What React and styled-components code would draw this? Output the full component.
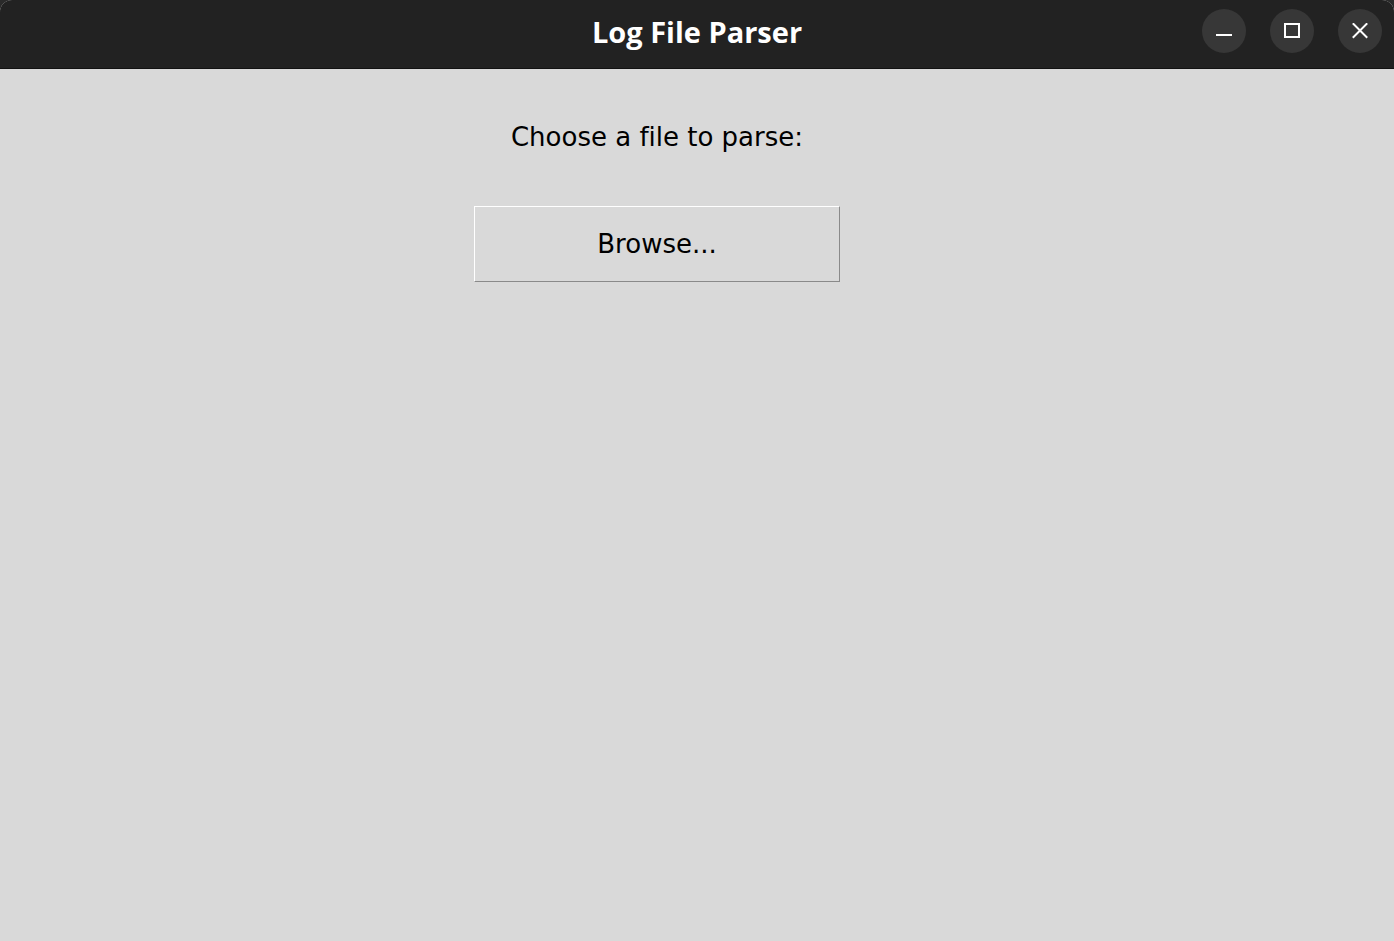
import React from "react";
import styled, { createGlobalStyle } from "styled-components";

const Global = createGlobalStyle`
  html, body { margin: 0; padding: 0; background: #2a2a2a; }
  #root { height: 941px; }
`;

const Window = styled.div`
  height: 941px;
  display: flex;
  flex-direction: column;
  background: #d9d9d9;
  border-radius: 12px 12px 0 0;
  overflow: hidden;
`;

const TitleBar = styled.div`
  height: 68px;
  flex: none;
  background: #222222;
  border-bottom: 1px solid #121212;
  display: grid;
  grid-template-columns: 1fr auto 1fr;
  align-items: center;
`;

const Title = styled.div`
  grid-column: 2;
  font-family: "Open Sans", "Noto Sans", sans-serif;
  font-weight: 700;
  font-size: 29px;
  color: #ffffff;
  line-height: 1;
  padding-bottom: 6px;
`;

const Controls = styled.div`
  grid-column: 3;
  justify-self: end;
  display: flex;
  gap: 24px;
  padding-right: 12px;
  padding-bottom: 6px;
`;

const CtrlButton = styled.div`
  width: 44px;
  height: 44px;
  border-radius: 50%;
  background: #373737;
  display: flex;
  align-items: center;
  justify-content: center;
`;

const Content = styled.div`
  flex: 1;
  display: flex;
  flex-direction: column;
  align-items: center;
  padding: 53px 80px 0 0;
`;

const Label = styled.div`
  font-family: "DejaVu Sans", sans-serif;
  font-size: 26px;
  line-height: 30px;
  color: #000;
  font-variant-ligatures: none;
`;

const Button = styled.button`
  margin-top: 54px;
  width: 366px;
  height: 76px;
  background: #d9d9d9;
  border-top: 1px solid #ffffff;
  border-left: 1px solid #ffffff;
  border-right: 1px solid #8a8a8a;
  border-bottom: 1px solid #8a8a8a;
  font-family: "DejaVu Sans", sans-serif;
  font-size: 26px;
  color: #000;
  padding: 0;
  display: flex;
  align-items: center;
  justify-content: center;
`;

const Minimize = () => (
  <svg width="16" height="16" viewBox="0 0 16 16">
    <rect x="0" y="11" width="16" height="2" fill="#fff" />
  </svg>
);
const Maximize = () => (
  <svg width="16" height="16" viewBox="0 0 16 16">
    <rect x="1" y="1" width="14" height="13" fill="none" stroke="#fff" strokeWidth="2" />
  </svg>
);
const Close = () => (
  <svg width="16" height="16" viewBox="0 0 16 16">
    <path d="M1.5 1 L14.5 14 M14.5 1 L1.5 14" stroke="#fff" strokeWidth="2" strokeLinecap="square" />
  </svg>
);

export default function App() {
  return (
    <>
      <Global />
      <Window>
        <TitleBar>
          <Title>Log File Parser</Title>
          <Controls>
            <CtrlButton><Minimize /></CtrlButton>
            <CtrlButton><Maximize /></CtrlButton>
            <CtrlButton><Close /></CtrlButton>
          </Controls>
        </TitleBar>
        <Content>
          <Label>Choose a file to parse:</Label>
          <Button>Browse...</Button>
        </Content>
      </Window>
    </>
  );
}
